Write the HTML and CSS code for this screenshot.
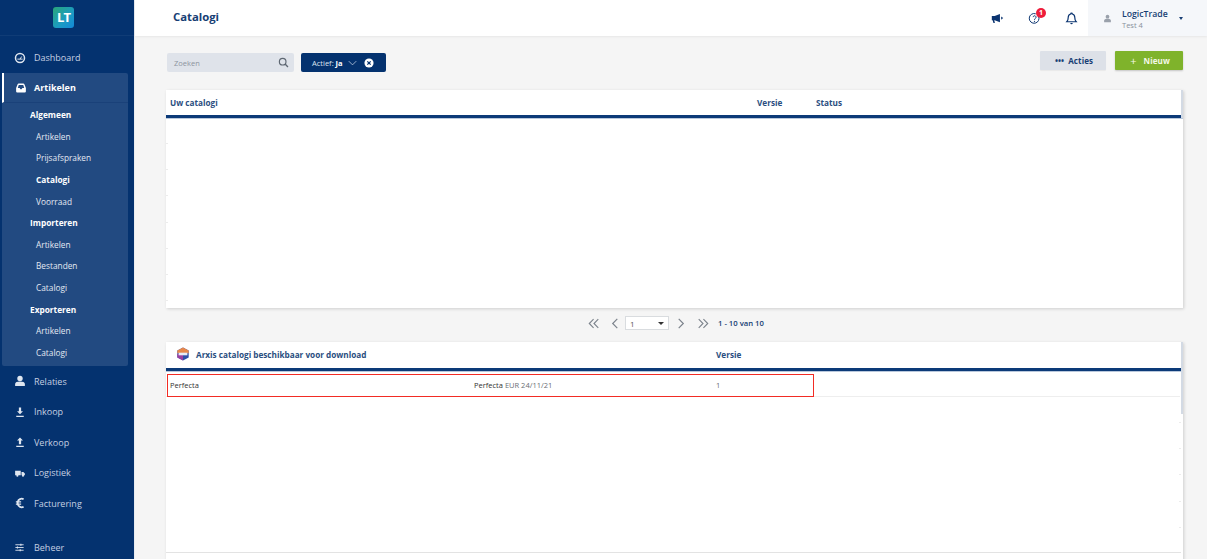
FILE: index.html
```html
<!DOCTYPE html>
<html lang="nl">
<head>
<meta charset="utf-8">
<title>Catalogi</title>
<link rel="stylesheet" href="styles.css">
</head>
<body>
<div class="app">
  <aside class="sidebar">
    <div class="logo-wrap"><div class="logo">LT</div></div>
    <nav class="nav">
      <a class="nav-item"><svg class="ico" viewBox="0 0 16 16"><circle cx="8" cy="8" r="6" fill="none" stroke="currentColor" stroke-width="2"/><path d="M4.500 9.500h7M8 9.500l2.200-3.500" stroke="currentColor" stroke-width="1.300"/></svg><span>Dashboard</span></a>
      <div class="panel">
        <a class="panel-head"><svg class="ico" viewBox="0 0 16 16"><path d="M3 14a1.500 1.500 0 0 1-1.500-1.500V8l2-5a1.500 1.500 0 0 1 1.400-1h6.200a1.500 1.500 0 0 1 1.400 1l2 5v4.500A1.500 1.500 0 0 1 13 14zM3.700 8h2.500l1 1.500h1.600l1-1.500h2.500L11 4H5z" fill="currentColor" fill-rule="evenodd"/></svg><span>Artikelen</span></a>
        <div class="sub">
          <div class="sub-title">Algemeen</div>
          <a class="sub-link">Artikelen</a>
          <a class="sub-link">Prijsafspraken</a>
          <a class="sub-link active">Catalogi</a>
          <a class="sub-link">Voorraad</a>
          <div class="sub-title">Importeren</div>
          <a class="sub-link">Artikelen</a>
          <a class="sub-link">Bestanden</a>
          <a class="sub-link">Catalogi</a>
          <div class="sub-title">Exporteren</div>
          <a class="sub-link">Artikelen</a>
          <a class="sub-link">Catalogi</a>
        </div>
      </div>
      <a class="nav-item"><svg class="ico" viewBox="0 0 16 16"><circle cx="8" cy="4.500" r="3.600" fill="currentColor"/><path d="M1.500 14.500v-2.500C1.500 9.500 4 8.500 8 8.500s6.500 1 6.500 3.500v2.500z" fill="currentColor"/></svg><span>Relaties</span></a>
      <a class="nav-item"><svg class="ico" viewBox="0 0 16 16"><path d="M6.500 2h3v5H12L8 11 4 7h2.500zM3 13h10v1.500H3z" fill="currentColor"/></svg><span>Inkoop</span></a>
      <a class="nav-item"><svg class="ico" viewBox="0 0 16 16"><path d="M6.500 11h3V6H12L8 2 4 6h2.500zM3 13h10v1.500H3z" fill="currentColor"/></svg><span>Verkoop</span></a>
      <a class="nav-item"><svg class="ico" viewBox="0 0 16 16"><path d="M1.500 5h7.500v6H1.500zM10 6.500h2.500l2 2V11H10z" fill="currentColor"/><circle cx="4.500" cy="11.500" r="1.400" fill="currentColor"/><circle cx="12" cy="11.500" r="1.400" fill="currentColor"/></svg><span>Logistiek</span></a>
      <a class="nav-item"><svg class="ico" viewBox="0 0 16 16"><path d="M12.800 3A5.300 5.300 0 0 0 5 6.500v3A5.300 5.300 0 0 0 12.800 13" fill="none" stroke="currentColor" stroke-width="2.400"/><path d="M2.500 6.500h7M2.500 9.500h7" stroke="currentColor" stroke-width="1.500"/></svg><span>Facturering</span></a>
      <a class="nav-item bottom"><svg class="ico small" viewBox="0 0 16 16"><path d="M2 4h12M2 8h12M2 12h12" stroke="currentColor" stroke-width="1.300"/><path d="M10 2.500v3M5 6.500v3M9 10.500v3" stroke="currentColor" stroke-width="1.600"/></svg><span>Beheer</span></a>
    </nav>
  </aside>
  <main class="main">
    <header class="topbar">
      <h1 class="page-title">Catalogi</h1>
      <div class="top-icons">
        <svg class="top-ico" viewBox="0 0 16 16"><path d="M1 5h3.500L11 2.500v10L4.500 10H4l.800 3.500H3L2 10H1z" fill="#0b3470"/><path d="M12.500 5.500 15 7.500l-2.500 2z" fill="#0b3470"/></svg>
        <span class="help"><svg class="top-ico" viewBox="0 0 16 16"><path d="M12.800 5A6 6 0 1 1 9.500 2.200" fill="none" stroke="#0b3470" stroke-width="1.200"/><path d="M6.300 6.300a1.800 1.800 0 1 1 2.700 1.700c-.7.400-1 .8-1 1.600" fill="none" stroke="#0b3470" stroke-width="1.200"/><circle cx="8" cy="11.500" r=".8" fill="#0b3470"/></svg><span class="badge">1</span></span>
        <svg class="top-ico" viewBox="0 0 16 16"><path d="M8 1.500a1 1 0 0 1 1 1c2 .5 3 2 3 4 0 3 .7 4.200 1.800 5.500H2.200C3.300 10.700 4 9.500 4 6.500c0-2 1-3.500 3-4a1 1 0 0 1 1-1z" fill="none" stroke="#0b3470" stroke-width="1.500"/><path d="M6.500 13.500a1.500 1.500 0 0 0 3 0z" fill="#0b3470"/></svg>
      </div>
      <div class="user">
        <svg class="user-ico" viewBox="0 0 16 16"><circle cx="8" cy="4.800" r="3.300" fill="#9aa1ab"/><path d="M2 14.500v-3C2 9.500 4.500 8.500 8 8.500s6 1 6 3v3z" fill="#9aa1ab"/></svg>
        <div class="user-text"><div class="user-name">LogicTrade</div><div class="user-org">Test 4</div></div>
        <span class="caret"></span>
      </div>
    </header>
    <div class="content">
      <div class="toolbar">
        <div class="search"><span>Zoeken</span><svg class="search-ico" viewBox="0 0 16 16"><circle cx="6.800" cy="6.800" r="4.800" fill="none" stroke="#5e6772" stroke-width="1.700"/><path d="m10.300 10.300 4.200 4.200" stroke="#5e6772" stroke-width="2"/></svg></div>
        <div class="filter"><span>Actief: <b>Ja</b></span><svg class="chev" viewBox="0 0 12 8"><path d="m1 1.500 5 5 5-5" fill="none" stroke="#c9d6e8" stroke-width="1"/></svg><svg class="clear" viewBox="0 0 12 12"><circle cx="6" cy="6" r="5.500" fill="#fff"/><path d="m4 4 4 4M8 4l-4 4" stroke="#04326f" stroke-width="1.500"/></svg></div>
        <div class="actions">
          <button class="btn btn-grey"><span class="dots">•••</span>Acties</button>
          <button class="btn btn-green"><span class="plus">+</span>Nieuw</button>
        </div>
      </div>
      <section class="card card-top">
        <div class="thead">
          <div class="th col-a">Uw catalogi</div>
          <div class="th col-b">Versie</div>
          <div class="th col-c">Status</div>
        </div>
        <div class="scrollbar scrollbar-top"></div>
        <div class="ticks ticks-left"></div>
      </section>
      <div class="pager">
        <svg class="pg pg-first" viewBox="0 0 14 12"><path d="M6.500 1 1.500 6l5 5M12 1 7 6l5 5" fill="none" stroke="#7c838c" stroke-width="1.300"/></svg>
        <svg class="pg pg-prev" viewBox="0 0 8 12"><path d="M6.500 1 1.500 6l5 5" fill="none" stroke="#7c838c" stroke-width="1.300"/></svg>
        <div class="pg-select"><span>1</span><i class="pg-caret"></i></div>
        <svg class="pg pg-next" viewBox="0 0 8 12"><path d="m1.500 1 5 5-5 5" fill="none" stroke="#7c838c" stroke-width="1.300"/></svg>
        <svg class="pg pg-last" viewBox="0 0 14 12"><path d="m2 1 5 5-5 5M7.500 1l5 5-5 5" fill="none" stroke="#7c838c" stroke-width="1.300"/></svg>
        <span class="pg-count">1 - 10 van 10</span>
      </div>
      <section class="card card-bottom">
        <div class="thead thead-b">
          <div class="th col-d"><svg class="arxis" viewBox="0 0 16 16"><path d="M8 .5 14.500 4v8L8 15.500 1.500 12V4z" fill="#2f4fa8"/><path d="M8 .5 14.500 4v3h-13V4z" fill="#e8874a"/><path d="M1.500 8h6.500v7.500L1.500 12z" fill="#9b3fa0"/><path d="M3 6.500h10v3H3z" fill="#e8ecf6"/></svg>Arxis catalogi beschikbaar voor download</div>
          <div class="th col-e">Versie</div>
        </div>
        <div class="scrollbar"></div>
        <div class="ticks ticks-right"></div>
        <div class="row-wrap">
          <div class="row">
            <div class="cell cell-a">Perfecta</div>
            <div class="cell cell-b">Perfecta <span class="muted">EUR 24/11/21</span></div>
            <div class="cell cell-c muted">1</div>
          </div>
        </div>
        <div class="foot-line"></div>
      </section>
    </div>
  </main>
</div>
</body>
</html>
```
FILE: styles.css
```css
* { box-sizing: border-box; }
html, body { margin: 0; height: 559px; overflow: hidden; background: #f5f5f5; }
body { font-family: "Open Sans", "Noto Sans", sans-serif; color: #0b3470; }
.app { display: flex; width: 1207px; height: 559px; }

.sidebar { width: 135px; flex: none; background: #04326f; color: #c4d0e2; display: flex; flex-direction: column; border-right: 1px solid #e8ecf1; }
.logo-wrap { height: 36px; display: flex; justify-content: center; align-items: center; border-bottom: 1px solid #103c76; }
.logo { width: 21px; height: 21px; margin-right: 7px; border-radius: 3px; background: linear-gradient(135deg, #2aa678 0%, #1b9bc4 60%, #1388d8 100%); color: #fff; font-size: 13px; font-weight: 700; letter-spacing: -1px; line-height: 21px; text-align: center; }
.nav { flex: 1; display: flex; flex-direction: column; padding-top: 6px; min-height: 0; }
.nav-item { height: 30.500px; display: flex; align-items: center; padding-left: 14px; font-size: 9px; flex: none; }
.nav-item:first-child { height: 31px; }
.nav-item span { margin-left: 8px; }
.nav-item .ico { width: 12px; height: 12px; color: #dfe6f0; }
.ico.small { width: 11px; height: 11px; }
.nav-item.bottom { margin-top: auto; margin-bottom: -4px; }
.nav-item.bottom span { margin-left: 9px; }

.panel { margin: 0 6px 0 2px; background: #224a81; border-radius: 2px; height: 293px; flex: none; }
.panel-head { height: 30px; display: flex; align-items: center; padding-left: 11px; color: #fff; font-size: 9px; font-weight: 700; border-left: 2px solid #fff; border-bottom: 1px solid #1a4179; }
.panel-head .ico { width: 12px; height: 12px; color: #fff; }
.panel-head span { margin-left: 7px; }
.sub { padding-top: 1px; }
.sub-title, .sub-link { height: 21.650px; line-height: 21.650px; font-size: 8.300px; color: #e3e9f2; }
.sub-title { padding-left: 28px; font-weight: 700; color: #fff; }
.sub-link { display: block; padding-left: 34px; }
.sub-link.active { font-weight: 700; color: #fff; }

.main { flex: 1; min-width: 0; display: flex; flex-direction: column; }
.topbar { height: 36px; flex: none; background: #fff; display: flex; align-items: center; box-shadow: 0 1px 2px rgba(0,0,0,.06); position: relative; }
.page-title { margin: 0 0 3px 38px; font-size: 11.300px; font-weight: 700; color: #173e74; flex: 1; }
.top-icons { display: flex; align-items: center; gap: 24px; margin-right: 10px; }
.top-ico { width: 13px; height: 13px; display: block; }
.help { position: relative; display: block; }
.badge { position: absolute; top: -4px; left: 8px; width: 10px; height: 10px; border-radius: 50%; background: #ee1c3b; color: #fff; font-size: 7px; font-weight: 700; line-height: 10px; text-align: center; }
.user { width: 119px; height: 36px; background: #f5f7fa; display: flex; align-items: center; padding-left: 15px; }
.user-ico { width: 9px; height: 9px; margin-right: 10px; }
.user-text { width: 55px; padding-top: 1px; }
.user-name { font-size: 8.700px; font-weight: 600; color: #173e74; line-height: 12px; }
.user-org { font-size: 7.500px; color: #8a929c; line-height: 10px; }
.caret { width: 0; height: 0; border: 2.500px solid transparent; border-top: 3px solid #173e74; border-bottom: 0; margin-left: 2px; }

.content { flex: 1; padding: 15px 24px 0 31px; min-height: 0; }
.toolbar { display: flex; align-items: flex-start; height: 39px; }
.search { margin: 2px 0 0 1px; width: 127px; height: 19px; background: #dfe3ea; border-radius: 2px; display: flex; align-items: center; justify-content: space-between; padding: 0 5px 0 7px; font-size: 7.500px; color: #8d949e; }
.search-ico { width: 11px; height: 11px; }
.filter { margin: 2px 0 0 7px; width: 85px; height: 19px; background: #04326f; border-radius: 2px; display: flex; align-items: center; padding: 0 11px; font-size: 7.500px; color: #dce5f1; }
.filter b { color: #fff; }
.chev { width: 9px; height: 6px; margin-left: 5px; }
.clear { width: 10px; height: 10px; margin-left: 7px; }
.actions { margin-left: auto; display: flex; gap: 9px; }
.btn { border: 0; height: 19px; font-family: inherit; font-size: 8px; font-weight: 700; border-radius: 1px; display: flex; align-items: center; justify-content: center; padding: 0; letter-spacing: .1px; }
.btn-grey { width: 66px; padding-left: 2px; background: #dde1e8; color: #173e74; box-shadow: 0 1px 1px rgba(0,0,0,.05); }
.dots { font-size: 8px; letter-spacing: .1px; margin-right: 4px; }
.btn-green { width: 68px; padding-left: 2px; background: #7fb32b; color: #f4f8e8; box-shadow: 0 1px 2px rgba(0,0,0,.2); }
.plus { font-size: 11px; font-weight: 400; margin-right: 7px; line-height: 1; }

.card { background: #fff; width: 1017px; position: relative; box-shadow: 1px 1px 3px rgba(0,0,0,.16); }
.card-top { height: 218px; }
.thead { height: 28px; display: flex; border-bottom: 3px solid #0c3a78; box-shadow: 0 1px 0 #b9c8dc; align-items: center; font-size: 8.200px; font-weight: 700; color: #2a4e80; }
.th { flex: none; }
.col-a { width: 591px; padding-left: 4px; }
.col-b { width: 59px; }
.thead-b { height: 29px; padding-bottom: 2px; }
.col-d { width: 550px; padding-left: 10px; display: flex; align-items: center; }
.arxis { width: 14px; height: 14px; margin-right: 6px; }
.pager { height: 34px; display: flex; align-items: center; padding: 0 0 4px 422px; }
.pg { height: 11px; flex: none; }
.pg-first { width: 12px; margin-right: 11px; }
.pg-prev { width: 8px; margin-right: 6px; }
.pg-next { width: 8px; margin-right: 12px; }
.pg-last { width: 12px; margin-right: 9px; }
.pg-select { width: 44px; height: 14px; background: #fff; border: 1px solid #d9dcdf; font-size: 8px; color: #555; display: flex; align-items: center; justify-content: space-between; padding: 0 4px; margin-right: 8px; }
.pg-caret { width: 0; height: 0; border: 3px solid transparent; border-top: 3px solid #333; border-bottom: 0; }
.pg-count { font-size: 7.700px; font-weight: 600; color: #173e74; }
.card-bottom { height: 240px; }
.scrollbar { position: absolute; right: 0; top: 0; width: 2px; height: 72px; background: #d3dae4; }
.scrollbar-top { height: 28px; }
.ticks { position: absolute; width: 2px; background: repeating-linear-gradient(to bottom, #ececec 0 1px, transparent 1px 26.2px); }
.ticks-left { left: 0; top: 53px; height: 160px; }
.ticks-right { right: 2px; top: 80px; height: 110px; }
.row-wrap { height: 26px; padding-top: 3px; border-bottom: 1px solid #eee; margin-right: 3px; }
.row { width: 647px; height: 23px; margin-left: 1px; padding-bottom: 1px; border: 1px solid #f22c24; display: flex; align-items: center; font-size: 7.500px; color: #333; }
.cell { flex: none; }
.cell-a { width: 306px; padding-left: 2px; }
.cell-b { width: 242px; }
.muted { color: #6a6e74; }
.foot-line { position: absolute; left: 0; right: 2px; top: 210px; height: 1px; background: #e3e3e3; }
```
